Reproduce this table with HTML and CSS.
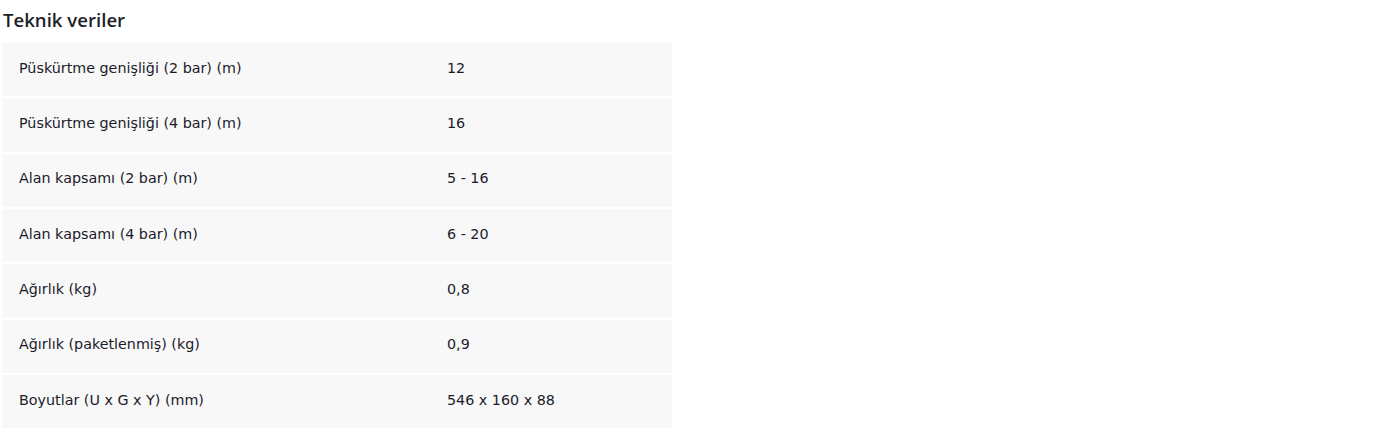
FILE: index.html
```html
<!DOCTYPE html>
<html lang="tr">
<head>
<meta charset="utf-8">
<link rel="stylesheet" href="styles.css">
</head>
<body>
<section class="specs">
  <h2 class="specs-title">Teknik veriler</h2>
  <div class="specs-table">
    <div class="row"><span class="label">Püskürtme genişliği (2 bar) (m)</span><span class="value">12</span></div>
    <div class="row"><span class="label">Püskürtme genişliği (4 bar) (m)</span><span class="value">16</span></div>
    <div class="row"><span class="label">Alan kapsamı (2 bar) (m)</span><span class="value">5 - 16</span></div>
    <div class="row"><span class="label">Alan kapsamı (4 bar) (m)</span><span class="value">6 - 20</span></div>
    <div class="row"><span class="label">Ağırlık (kg)</span><span class="value">0,8</span></div>
    <div class="row"><span class="label">Ağırlık (paketlenmiş) (kg)</span><span class="value">0,9</span></div>
    <div class="row"><span class="label">Boyutlar (U x G x Y) (mm)</span><span class="value">546 x 160 x 88</span></div>
  </div>
</section>
</body>
</html>
```

FILE: styles.css
```css
html, body {
  margin: 0;
  padding: 0;
  background: #ffffff;
}
body {
  font-family: "DejaVu Sans", "Noto Sans", sans-serif;
  color: #1b1b2b;
}
.specs {
  width: 670px;
  padding-left: 2px;
}
.specs-title {
  margin: 0;
  padding: 7px 0 0 1px;
  height: 36px;
  box-sizing: border-box;
  font-family: "Open Sans", "Noto Sans", sans-serif;
  font-size: 18.6px;
  font-weight: 600;
  line-height: 26px;
  color: #1e1e28;
}
.specs-table {
  display: flex;
  flex-direction: column;
  gap: 2px;
  padding-top: 7px;
}
.row {
  display: grid;
  grid-template-columns: 428px 1fr;
  align-items: center;
  box-sizing: border-box;
  height: 53.33px;
  background: #f8f8f8;
  padding: 0 0 4px 17px;
  font-size: 14.3px;
}
.label, .value {
  line-height: 20px;
}
```
